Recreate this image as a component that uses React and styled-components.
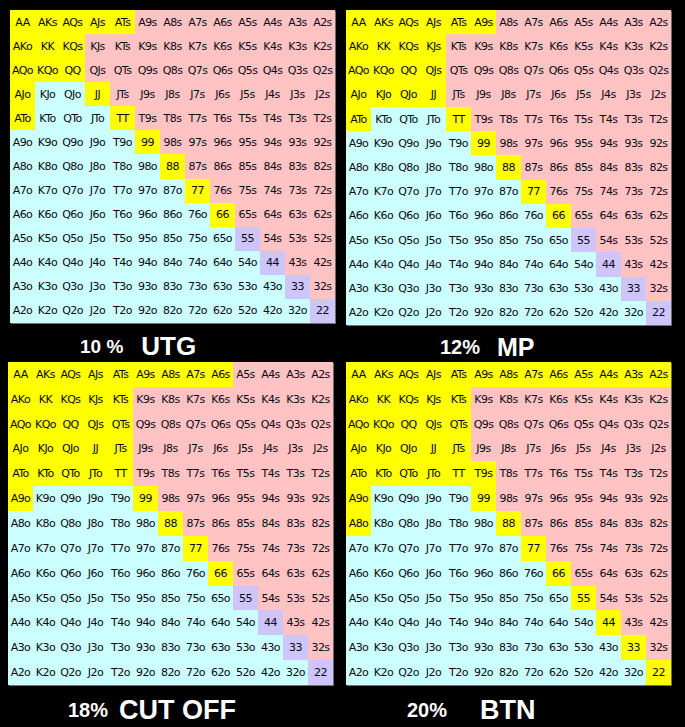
import React from "react";
import styled, { createGlobalStyle } from "styled-components";

const RANKS = "AKQJT98765432".split("");

const charts = [
  {
    id: "utg",
    pct: "10 %",
    pos: "UTG",
    inset: 10,
    indent: 70,
    gap: 18,
    pctSize: 19,
    posSize: 26,
    hands:
      "AA KK QQ JJ TT 99 88 77 66 AKs AQs AJs ATs KQs AKo AQo AJo ATo KQo",
  },
  {
    id: "mp",
    pct: "12%",
    pos: "MP",
    inset: 0,
    indent: 94,
    gap: 17,
    pctSize: 20,
    posSize: 25,
    hands:
      "AA KK QQ JJ TT 99 88 77 66 AKs AQs AJs ATs A9s KQs KJs QJs AKo AQo AJo ATo KQo KJo QJo",
  },
  {
    id: "co",
    pct: "18%",
    pos: "CUT OFF",
    inset: 8,
    indent: 60,
    gap: 11,
    pctSize: 20,
    posSize: 27,
    hands:
      "AA KK QQ JJ TT 99 88 77 66 AKs AQs AJs ATs A9s A8s A7s A6s KQs KJs KTs QJs QTs JTs AKo AQo AJo ATo A9o KQo KJo KTo QJo QTo JTo",
  },
  {
    id: "btn",
    pct: "20%",
    pos: "BTN",
    inset: 0,
    indent: 61,
    gap: 33,
    pctSize: 20,
    posSize: 27,
    hands:
      "AA KK QQ JJ TT 99 88 77 66 55 44 33 22 AKs AQs AJs ATs A9s A8s A7s A6s A5s A4s A3s A2s KQs KJs KTs QJs QTs JTs T9s AKo AQo AJo ATo A9o A8o KQo KJo KTo QJo QTo JTo",
  },
];

function handName(r, c) {
  if (r === c) return RANKS[r] + RANKS[r];
  if (c > r) return RANKS[r] + RANKS[c] + "s";
  return RANKS[c] + RANKS[r] + "o";
}

function toneFor(r, c, open) {
  if (open.has(handName(r, c))) return "open";
  if (r === c) return "pair";
  return c > r ? "suited" : "offsuit";
}

const GlobalStyle = createGlobalStyle`
  html, body {
    margin: 0;
    padding: 0;
    background: #000;
  }
`;

const Board = styled.main`
  width: 685px;
  height: 727px;
  background: #000;
  padding-top: 10px;
  box-sizing: border-box;
  display: grid;
  grid-template-columns: 346px 339px;
  grid-template-rows: 352px 365px;
`;

const Panel = styled.section`
  padding-left: ${(p) => p.$inset}px;
  display: flex;
  flex-direction: column;
`;

const Chart = styled.div`
  width: 325px;
  height: 323px;
  display: grid;
  grid-template-columns: repeat(13, 25px);
  grid-template-rows: repeat(13, 1fr);
  box-shadow: 1px 1px 0 #6e6e6e;
`;

const toneColors = {
  open: "#ffff00",
  pair: "#cdc5fb",
  suited: "#ffc3c3",
  offsuit: "#ccffff",
};

const Cell = styled.div`
  background: ${(p) => toneColors[p.$tone]};
  display: flex;
  align-items: center;
  justify-content: center;
  font-family: "DejaVu Sans", Verdana, sans-serif;
  font-size: 11px;
  letter-spacing: -0.55px;
  color: #0a0a14;
  white-space: nowrap;
`;

const Caption = styled.div`
  flex: 1;
  display: flex;
  align-items: center;
  gap: ${(p) => p.$gap}px;
  padding-left: ${(p) => p.$indent}px;
  padding-top: 8px;
  font-family: "Liberation Sans", Arial, sans-serif;
  font-weight: 700;
  color: #fff;
`;

const Pct = styled.span`
  font-size: ${(p) => p.$size}px;
`;

const Pos = styled.span`
  font-size: ${(p) => p.$size}px;
`;

function RangeChart({ chart }) {
  const open = new Set(chart.hands.split(" "));
  const cells = [];
  RANKS.forEach((_, r) =>
    RANKS.forEach((__, c) =>
      cells.push(
        <Cell key={`${r}-${c}`} $tone={toneFor(r, c, open)}>
          {handName(r, c)}
        </Cell>
      )
    )
  );
  return (
    <Panel $inset={chart.inset}>
      <Chart>{cells}</Chart>
      <Caption $indent={chart.indent} $gap={chart.gap}>
        <Pct $size={chart.pctSize}>{chart.pct}</Pct>
        <Pos $size={chart.posSize}>{chart.pos}</Pos>
      </Caption>
    </Panel>
  );
}

export default function App() {
  return (
    <>
      <GlobalStyle />
      <Board>
        {charts.map((chart) => (
          <RangeChart key={chart.id} chart={chart} />
        ))}
      </Board>
    </>
  );
}
